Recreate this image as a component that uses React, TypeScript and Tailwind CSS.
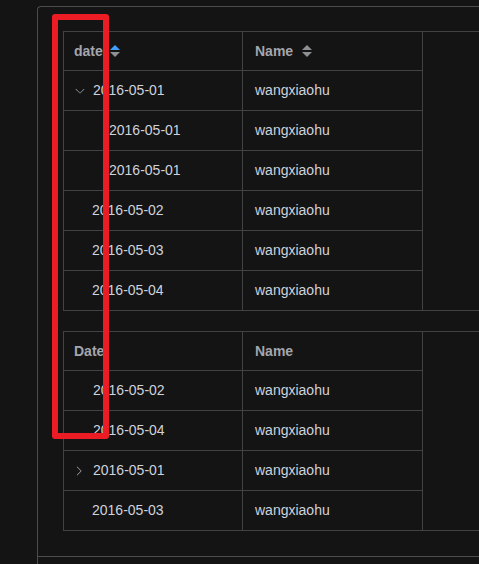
import React from "react";

const ARROW_RIGHT =
  "M340.864 149.312a30.592 30.592 0 0 0 0 42.752L652.736 512 340.864 831.872a30.592 30.592 0 0 0 0 42.752 29.12 29.12 0 0 0 41.728 0L714.24 534.336a32 32 0 0 0 0-44.672L382.592 149.376a29.12 29.12 0 0 0-41.728 0z";

function Arrow({ down }: { down?: boolean }) {
  return (
    <svg
      viewBox="0 0 1024 1024"
      width={12}
      height={12}
      className={down ? "rotate-90 shrink-0" : "shrink-0 -translate-x-[1px]"}
    >
      <path d={ARROW_RIGHT} fill="#a3a6ad" />
    </svg>
  );
}

function SortCaret({ active }: { active?: boolean }) {
  return (
    <span className="flex flex-col items-center gap-[2px] w-[10px]">
      <span
        className={
          "block w-0 h-0 border-x-[5px] border-x-transparent border-b-[5px] " +
          (active ? "border-b-[#409eff]" : "border-b-[#8d9095]")
        }
      />
      <span className="block w-0 h-0 border-x-[5px] border-x-transparent border-t-[5px] border-t-[#8d9095]" />
    </span>
  );
}

type Row = { date: string; name: string; pad: number; icon?: "down" | "right" };

function Table({
  header,
  rows,
}: {
  header: React.ReactNode[];
  rows: Row[];
}) {
  return (
    <div className="w-[700px] border-t border-l border-b border-[#414243]">
      <div className="w-[359px]">
        <div className="flex h-[39px] border-b border-[#414243]">
          <div className="w-[179px] border-r border-[#414243] pl-[10px] flex items-center text-[14px] font-semibold text-[#a3a6ad]">
            {header[0]}
          </div>
          <div className="w-[180px] border-r border-[#414243] pl-[12px] flex items-center text-[14px] font-semibold text-[#a3a6ad]">
            {header[1]}
          </div>
        </div>
        {rows.map((r, i) => (
          <div
            key={i}
            className={
              i < rows.length - 1
                ? "flex h-[40px] border-b border-[#414243]"
                : "flex h-[39px]"
            }
          >
            <div className="w-[179px] border-r border-[#414243] pl-[10px] flex items-center text-[14px] text-[#cfd3dc]">
              {r.icon ? (
                <>
                  <Arrow down={r.icon === "down"} />
                  <span className="ml-[7px]">{r.date}</span>
                </>
              ) : (
                <span style={{ paddingLeft: r.pad }}>{r.date}</span>
              )}
            </div>
            <div className="w-[180px] border-r border-[#414243] pl-[12px] flex items-center text-[14px] text-[#cfd3dc]">
              {r.name}
            </div>
          </div>
        ))}
      </div>
    </div>
  );
}

export default function App() {
  const n = "wangxiaohu";
  const rows1: Row[] = [
    { date: "2016-05-01", name: n, pad: 0, icon: "down" },
    { date: "2016-05-01", name: n, pad: 35 },
    { date: "2016-05-01", name: n, pad: 35 },
    { date: "2016-05-02", name: n, pad: 18 },
    { date: "2016-05-03", name: n, pad: 18 },
    { date: "2016-05-04", name: n, pad: 18 },
  ];
  const rows2: Row[] = [
    { date: "2016-05-02", name: n, pad: 19 },
    { date: "2016-05-04", name: n, pad: 19 },
    { date: "2016-05-01", name: n, pad: 0, icon: "right" },
    { date: "2016-05-03", name: n, pad: 18 },
  ];
  return (
    <div
      className="relative w-[479px] h-[564px] overflow-hidden bg-[#141414]"
      style={{ fontFamily: '"Liberation Sans", Arial, sans-serif' }}
    >
      <div className="ml-[37px] mt-[6px] w-[800px] border-t border-l border-[#4c4d4f] rounded-tl-[4px]">
        <div className="pl-[25px] pt-6 pb-[25px] flex flex-col gap-5">
          <Table
            header={[
              <span className="flex items-center">
                date
                <span className="ml-[7px]">
                  <SortCaret active />
                </span>
              </span>,
              <span className="flex items-center">
                Name
                <span className="ml-[9px]">
                  <SortCaret />
                </span>
              </span>,
            ]}
            rows={rows1}
          />
          <Table header={["Date", "Name"]} rows={rows2} />
        </div>
        <div className="h-[60px] border-t border-[#4c4d4f]" />
      </div>
      <div className="absolute left-[52px] top-[14px] w-[57px] h-[425px] border-[6px] border-[#ec1c24] rounded-[3px]" />
    </div>
  );
}
